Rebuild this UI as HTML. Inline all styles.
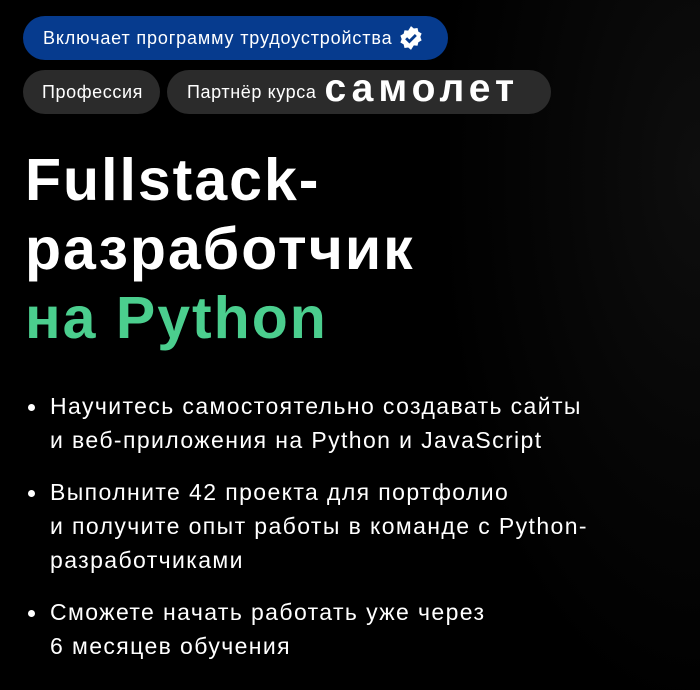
<!DOCTYPE html>
<html><head><meta charset="utf-8"><style>
*{margin:0;padding:0;box-sizing:border-box}
body{width:700px;height:690px;overflow:hidden;background:#000;font-family:"Liberation Sans","DejaVu Sans",sans-serif;color:#fff;position:relative}
.glow{position:absolute;left:450px;top:0;width:250px;height:690px;background:radial-gradient(ellipse at 100% 25%,#0e0e0e 0%,#060606 40%,#000 75%)}
.pill{position:absolute;height:44px;border-radius:22px;display:flex;align-items:center;font-size:18px;white-space:nowrap}
.b1{left:23px;top:16px;width:425px;background:#063b8e;padding-left:20px;letter-spacing:0.85px}
.b2{left:23px;top:70px;width:137px;background:#2b2b2b;padding-left:19px;letter-spacing:0.6px}
.b3{left:167px;top:70px;width:384px;background:#2b2b2b;padding-left:20px;letter-spacing:0.6px}
.logo{font-weight:bold;font-size:39px;margin-left:8px;letter-spacing:5px;margin-top:-6px}
h1{position:absolute;left:25px;top:146px;font-size:59px;line-height:69px;font-weight:bold;letter-spacing:2px}
.g{color:#4bce8e}
ul{position:absolute;left:28px;top:389px;list-style:none;font-size:23px;line-height:34px;letter-spacing:1.4px}
li{position:relative;padding-left:22px;margin-bottom:18px}
li:before{content:"";position:absolute;left:0;top:15px;width:7px;height:7px;border-radius:50%;background:#fff}
</style></head><body>
<div class="glow"></div>
<div class="pill b1">Включает программу трудоустройства
<svg width="26" height="26" viewBox="0 0 24 24" style="margin-left:6px"><path fill="#fff" d="M12 1l2.6 2.2 3.4-.4.8 3.3 3 1.7-1.2 3.2 1.2 3.2-3 1.7-.8 3.3-3.4-.4L12 23l-2.6-2.2-3.4.4-.8-3.3-3-1.7L3.4 13 2.2 9.8l3-1.7.8-3.3 3.4.4z"/><path d="M7.5 12.2l3 3 6-6" stroke="#063b8e" stroke-width="2.6" fill="none"/></svg></div>
<div class="pill b2">Профессия</div>
<div class="pill b3">Партнёр курса <span class="logo">самолет</span></div>
<h1>Fullstack-<br>разработчик<br><span class="g">на Python</span></h1>
<ul>
<li>Научитесь самостоятельно создавать сайты<br>и веб-приложения на Python и JavaScript</li>
<li>Выполните 42 проекта для портфолио<br>и получите опыт работы в команде с Python-<br>разработчиками</li>
<li>Сможете начать работать уже через<br>6 месяцев обучения</li>
</ul>
</body></html>
